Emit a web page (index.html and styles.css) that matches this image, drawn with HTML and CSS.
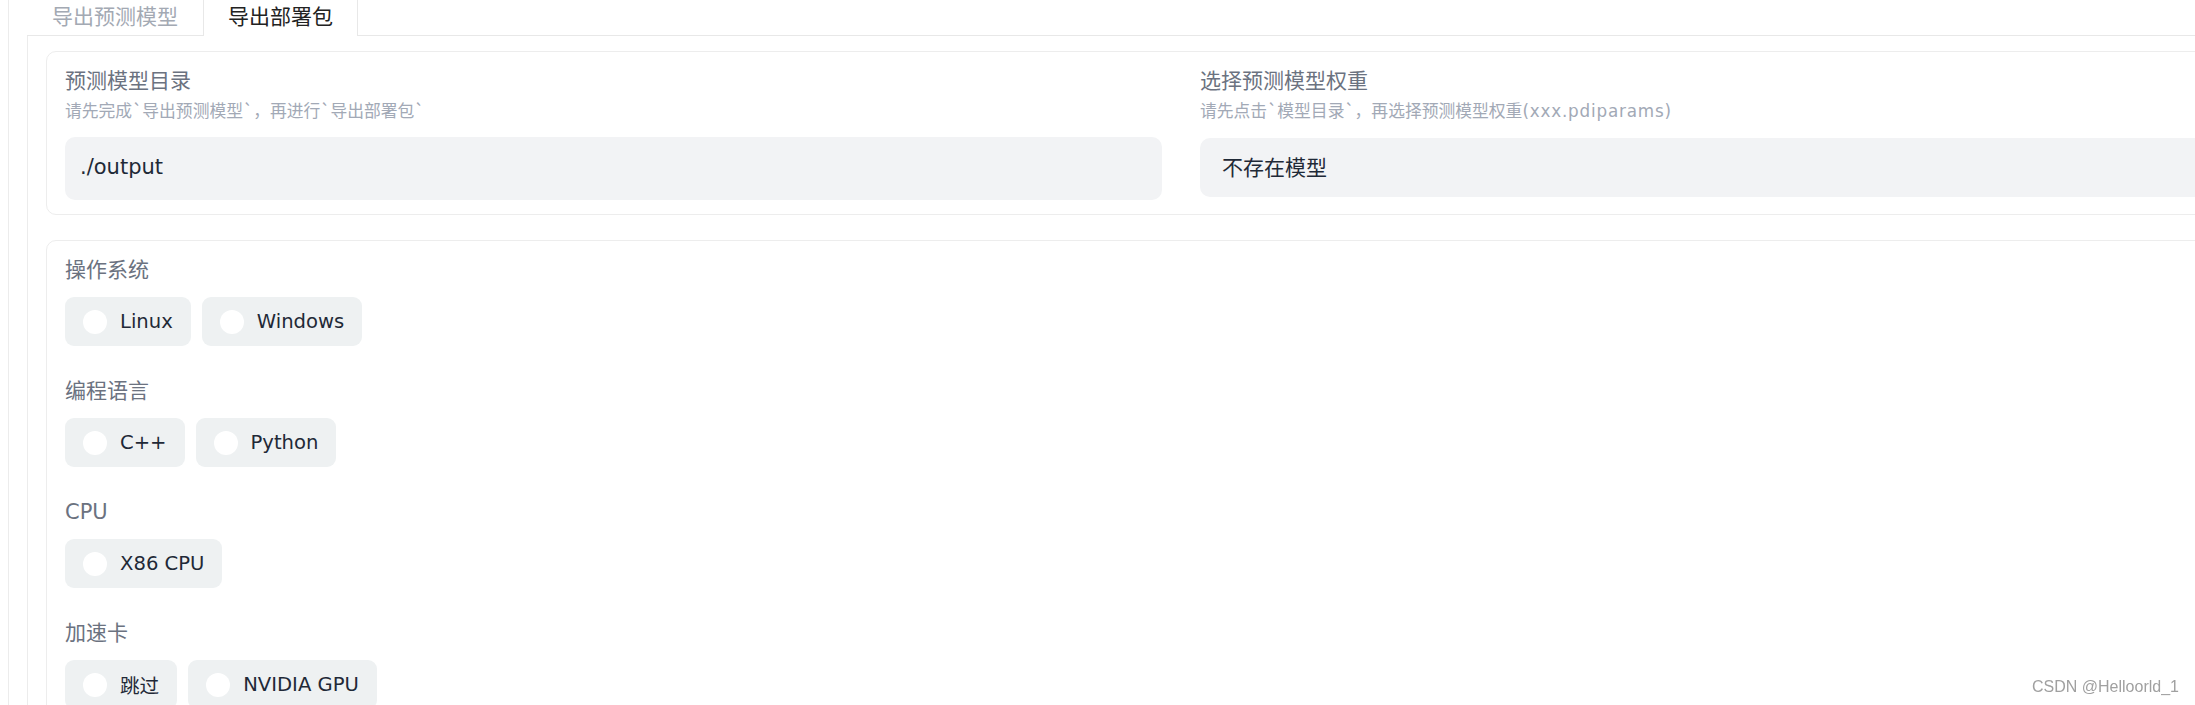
FILE: index.html
```html
<!DOCTYPE html>
<html lang="zh-CN">
<head>
<meta charset="utf-8">
<title>导出部署包</title>
<link rel="stylesheet" href="styles.css">
</head>
<body>
<div class="frame">
  <div class="tabs">
    <div class="tab">导出预测模型</div>
    <div class="tab tab-active">导出部署包</div>
  </div>
  <div class="tab-content">
    <div class="card card-model">
      <div class="field">
        <div class="label">预测模型目录</div>
        <div class="hint">请先完成`导出预测模型`，再进行`导出部署包`</div>
        <div class="input">./output</div>
      </div>
      <div class="field">
        <div class="label">选择预测模型权重</div>
        <div class="hint">请先点击`模型目录`，再选择预测模型权重<span class="hint-latin">(xxx.pdiparams)</span></div>
        <div class="input input-select">不存在模型</div>
      </div>
    </div>
    <div class="card card-options">
      <div class="group">
        <div class="label">操作系统</div>
        <div class="pills">
          <div class="pill"><span class="dot"></span><span class="pill-text">Linux</span></div>
          <div class="pill"><span class="dot"></span><span class="pill-text">Windows</span></div>
        </div>
      </div>
      <div class="group">
        <div class="label">编程语言</div>
        <div class="pills">
          <div class="pill"><span class="dot"></span><span class="pill-text">C++</span></div>
          <div class="pill"><span class="dot"></span><span class="pill-text">Python</span></div>
        </div>
      </div>
      <div class="group">
        <div class="label">CPU</div>
        <div class="pills">
          <div class="pill"><span class="dot"></span><span class="pill-text">X86 CPU</span></div>
        </div>
      </div>
      <div class="group">
        <div class="label">加速卡</div>
        <div class="pills">
          <div class="pill"><span class="dot"></span><span class="pill-text">跳过</span></div>
          <div class="pill"><span class="dot"></span><span class="pill-text">NVIDIA GPU</span></div>
        </div>
      </div>
    </div>
  </div>
</div>
<div class="watermark">CSDN @Helloorld_1</div>
</body>
</html>
```
FILE: styles.css
```css
html, body {
  margin: 0;
  padding: 0;
  background: #ffffff;
  overflow: hidden;
  height: 705px;
}
body {
  font-family: "DejaVu Sans", "Noto Sans CJK SC", sans-serif;
  color: #1f2937;
}
.frame {
  margin-left: 8px;
  border-left: 1px solid #ececec;
  padding-left: 18px;
  width: 2400px;
  height: 800px;
}
.tabs {
  display: flex;
  height: 36px;
  box-sizing: border-box;
  border-bottom: 1px solid #e8e8e8;
}
.tab {
  padding: 0 25px;
  font-size: 21px;
  line-height: 30px;
  color: #a3a9b3;
  font-family: "Noto Sans CJK SC", sans-serif;
}
.tab-active {
  padding: 0 24px;
  color: #222;
  background: #fff;
  border-left: 1px solid #e8e8e8;
  border-right: 1px solid #e8e8e8;
  height: 36px;
  box-sizing: border-box;
  margin-bottom: -1px;
}
.tab-content {
  border-left: 1px solid #ececec;
  padding: 15px 0 0 18px;
}
.card {
  border: 1px solid #ededed;
  border-radius: 10px;
  width: 2270px;
  box-sizing: border-box;
}
.card-model {
  display: grid;
  grid-template-columns: 1097px 1097px;
  column-gap: 38px;
  padding: 15px 18px 14px;
}
.label {
  font-size: 21px;
  line-height: 28px;
  color: #6b7280;
  font-family: "DejaVu Sans", "Noto Sans CJK SC", sans-serif;
}
.hint {
  font-size: 16.8px;
  line-height: 24px;
  color: #a2a9b6;
  font-family: "Noto Sans CJK SC", sans-serif;
  margin-top: 3px;
}
.hint-latin {
  font-family: "DejaVu Sans", sans-serif;
  letter-spacing: 0.8px;
}
.input {
  margin-top: 15px;
  height: 63px;
  box-sizing: border-box;
  background: #f2f3f5;
  border-radius: 10px;
  padding-left: 15px;
  padding-bottom: 3px;
  display: flex;
  align-items: center;
  font-size: 21px;
  color: #1f2937;
}
.input-select {
  height: 59px;
  padding-left: 22px;
  font-family: "Noto Sans CJK SC", sans-serif;
}
.card-options {
  margin-top: 25px;
  padding: 15px 18px 20px;
}
.group + .group {
  margin-top: 31px;
}
.pills {
  display: flex;
  gap: 11px;
  margin-top: 13px;
}
.pill {
  height: 49px;
  box-sizing: border-box;
  padding: 0 18px;
  background: #eef1f2;
  border-radius: 9px;
  display: flex;
  align-items: center;
  gap: 13px;
}
.dot {
  width: 24px;
  height: 24px;
  border-radius: 50%;
  background: #ffffff;
  flex: none;
}
.pill-text {
  font-size: 19.6px;
  color: #1f2937;
}
.watermark {
  position: fixed;
  right: 16px;
  bottom: 9px;
  font-family: "Liberation Sans", Arial, sans-serif;
  font-size: 16px;
  color: #a0a0a0;
  text-shadow: 0 0 1px #fff;
}
```
